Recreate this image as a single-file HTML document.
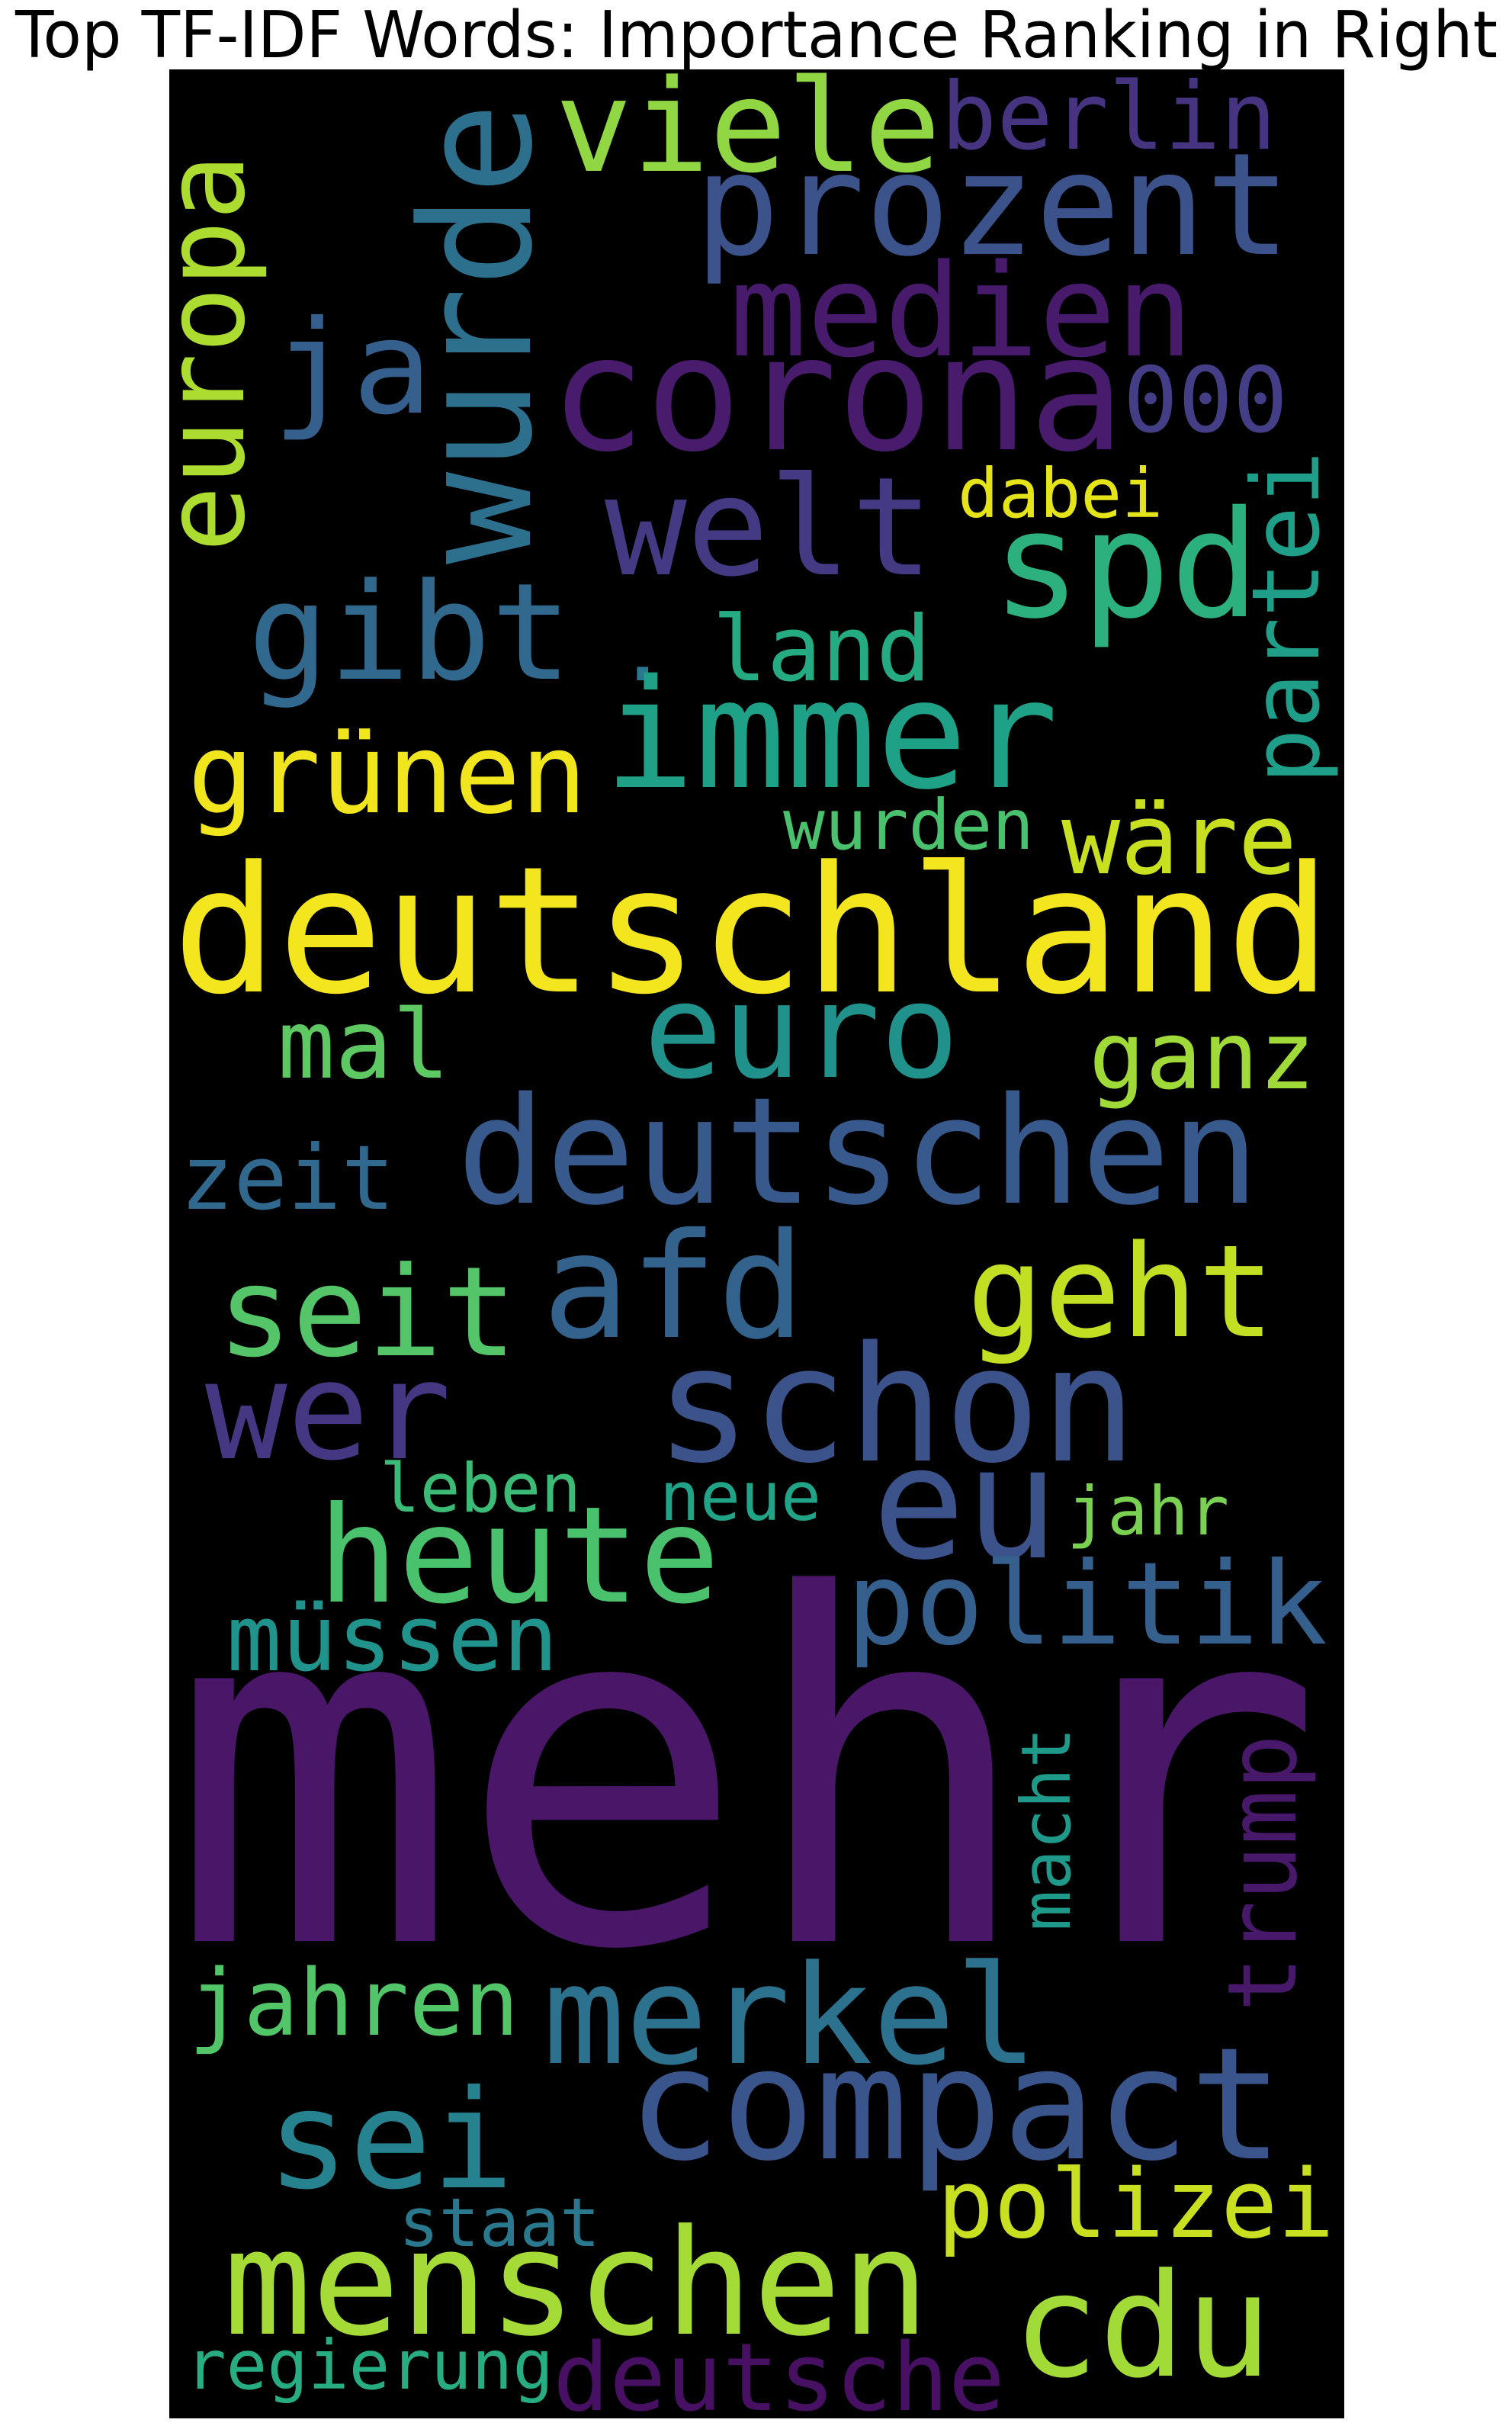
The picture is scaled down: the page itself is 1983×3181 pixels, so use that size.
<!DOCTYPE html>
<html><head><meta charset="utf-8"><style>
html,body{margin:0;padding:0;background:#fff;}
svg{display:block;}
.w{font-family:"DejaVu Sans Mono","Liberation Mono",monospace;}
</style></head><body>
<svg xmlns="http://www.w3.org/2000/svg" width="1983" height="3181" viewBox="0 0 1983 3181">
<rect width="1983" height="3181" fill="#fff"/>
<text x="992" y="75" text-anchor="middle" font-family="DejaVu Sans, Liberation Sans, sans-serif" font-size="85" textLength="1944" lengthAdjust="spacingAndGlyphs" fill="#000">Top TF-IDF Words: Importance Ranking in Right</text>
<clipPath id="c"><rect x="222" y="91" width="1541" height="3080"/></clipPath>
<rect x="222" y="91" width="1541" height="3080" fill="#000"/>
<g clip-path="url(#c)" class="w" lengthAdjust="spacingAndGlyphs">
<text x="728" y="224" font-size="168" textLength="506" lengthAdjust="spacingAndGlyphs" fill="#90d743">viele</text>
<text x="1234" y="195" font-size="122" textLength="440" lengthAdjust="spacingAndGlyphs" fill="#463480">berlin</text>
<text x="911" y="333" font-size="186" textLength="782" lengthAdjust="spacingAndGlyphs" fill="#3b528b">prozent</text>
<text x="957" y="466" font-size="168" textLength="608" lengthAdjust="spacingAndGlyphs" fill="#481a6c">medien</text>
<text x="721" y="589" font-size="209" textLength="754" lengthAdjust="spacingAndGlyphs" fill="#481b6d">corona</text>
<text x="1473" y="566" font-size="119" textLength="216" lengthAdjust="spacingAndGlyphs" fill="#433e85">000</text>
<text x="357" y="541" font-size="170" textLength="210" lengthAdjust="spacingAndGlyphs" fill="#355f8d">ja</text>
<text x="793" y="753" font-size="179" textLength="431" lengthAdjust="spacingAndGlyphs" fill="#443983">welt</text>
<text x="1256" y="678" font-size="89" textLength="269" lengthAdjust="spacingAndGlyphs" fill="#e5e419">dabei</text>
<text x="1301" y="808" font-size="194" textLength="351" lengthAdjust="spacingAndGlyphs" fill="#2cb17e">spd</text>
<text x="325" y="890" font-size="176" textLength="425" lengthAdjust="spacingAndGlyphs" fill="#31688e">gibt</text>
<text x="807" y="892" font-size="119" fill="#2a788e">.</text>
<text x="934" y="892" font-size="119" textLength="287" lengthAdjust="spacingAndGlyphs" fill="#25ab82">land</text>
<text x="792" y="1032" font-size="198" textLength="596" lengthAdjust="spacingAndGlyphs" fill="#1fa187">immer</text>
<text x="246" y="1065" font-size="145" textLength="524" lengthAdjust="spacingAndGlyphs" fill="#f1e51d">grünen</text>
<text x="1027" y="1113" font-size="91" textLength="329" lengthAdjust="spacingAndGlyphs" fill="#4ac16d">wurden</text>
<text x="1392" y="1145" font-size="128" textLength="309" lengthAdjust="spacingAndGlyphs" fill="#c8e020">wäre</text>
<text x="226" y="1300" font-size="230" textLength="1520" lengthAdjust="spacingAndGlyphs" fill="#f4e61e">deutschland</text>
<text x="364" y="1413" font-size="125" textLength="226" lengthAdjust="spacingAndGlyphs" fill="#5ec962">mal</text>
<text x="844" y="1412" font-size="172" textLength="414" lengthAdjust="spacingAndGlyphs" fill="#21918c">euro</text>
<text x="1428" y="1427" font-size="123" textLength="297" lengthAdjust="spacingAndGlyphs" fill="#a0da39">ganz</text>
<text x="599" y="1577" font-size="194" textLength="1053" lengthAdjust="spacingAndGlyphs" fill="#38598c">deutschen</text>
<text x="236" y="1585" font-size="117" textLength="282" lengthAdjust="spacingAndGlyphs" fill="#31688e">zeit</text>
<text x="285" y="1777" font-size="163" textLength="393" lengthAdjust="spacingAndGlyphs" fill="#54c568">seit</text>
<text x="711" y="1753" font-size="191" textLength="345" lengthAdjust="spacingAndGlyphs" fill="#33638d">afd</text>
<text x="1268" y="1752" font-size="168" textLength="404" lengthAdjust="spacingAndGlyphs" fill="#c2df23">geht</text>
<text x="269" y="1912" font-size="178" textLength="323" lengthAdjust="spacingAndGlyphs" fill="#453781">wer</text>
<text x="859" y="1915" font-size="210" textLength="632" lengthAdjust="spacingAndGlyphs" fill="#3b528b">schon</text>
<text x="498" y="1982" font-size="88" textLength="264" lengthAdjust="spacingAndGlyphs" fill="#3bbb75">leben</text>
<text x="865" y="1993" font-size="88" textLength="212" lengthAdjust="spacingAndGlyphs" fill="#20a386">neue</text>
<text x="1144" y="2042" font-size="204" textLength="244" lengthAdjust="spacingAndGlyphs" fill="#3b528b">eu</text>
<text x="1399" y="2012" font-size="88" textLength="213" lengthAdjust="spacingAndGlyphs" fill="#7ad151">jahr</text>
<text x="417" y="2100" font-size="175" textLength="527" lengthAdjust="spacingAndGlyphs" fill="#4ac16d">heute</text>
<text x="1110" y="2155" font-size="150" textLength="631" lengthAdjust="spacingAndGlyphs" fill="#355f8d">politik</text>
<text x="297" y="2190" font-size="120" textLength="435" lengthAdjust="spacingAndGlyphs" fill="#20938c">müssen</text>
<text x="222" y="2545" font-size="630" textLength="1514" lengthAdjust="spacingAndGlyphs" fill="#4a1668">mehr</text>
<text x="247" y="2668" font-size="120" textLength="434" lengthAdjust="spacingAndGlyphs" fill="#52c569">jahren</text>
<text x="712" y="2705" font-size="180" textLength="649" lengthAdjust="spacingAndGlyphs" fill="#2c728e">merkel</text>
<text x="823" y="2830" font-size="204" textLength="860" lengthAdjust="spacingAndGlyphs" fill="#3a548c">compact</text>
<text x="350" y="2868" font-size="179" textLength="324" lengthAdjust="spacingAndGlyphs" fill="#26828e">sei</text>
<text x="1229" y="2933" font-size="124" textLength="521" lengthAdjust="spacingAndGlyphs" fill="#c8e020">polizei</text>
<text x="523" y="2945" font-size="88" textLength="264" lengthAdjust="spacingAndGlyphs" fill="#2a788e">staat</text>
<text x="293" y="3060" font-size="192" textLength="926" lengthAdjust="spacingAndGlyphs" fill="#a5db36">menschen</text>
<text x="1328" y="3115" font-size="188" textLength="340" lengthAdjust="spacingAndGlyphs" fill="#a2da37">cdu</text>
<text x="243" y="3132" font-size="89" textLength="483" lengthAdjust="spacingAndGlyphs" fill="#27ad81">regierung</text>
<text x="725" y="3160" font-size="123" textLength="593" lengthAdjust="spacingAndGlyphs" fill="#471063">deutsche</text>
<g transform="translate(695,730) rotate(-90)"><text x="-10" y="0" font-size="201" textLength="606" lengthAdjust="spacingAndGlyphs" fill="#2d708e">wurde</text></g>
<g transform="translate(319,717) rotate(-90)"><text x="-7" y="0" font-size="145" textLength="522" lengthAdjust="spacingAndGlyphs" fill="#addc30">europa</text></g>
<g transform="translate(1729,1022) rotate(-90)"><text x="-6" y="0" font-size="122" textLength="437" lengthAdjust="spacingAndGlyphs" fill="#1f9e89">partei</text></g>
<g transform="translate(1403,2528) rotate(-90)"><text x="-4" y="0" font-size="89" textLength="267" lengthAdjust="spacingAndGlyphs" fill="#1f9a8a">macht</text></g>
<g transform="translate(1699,2632) rotate(-90)"><text x="-6" y="0" font-size="125" textLength="364" lengthAdjust="spacingAndGlyphs" fill="#48186a">trump</text></g>
</g>
</svg>
</body></html>
